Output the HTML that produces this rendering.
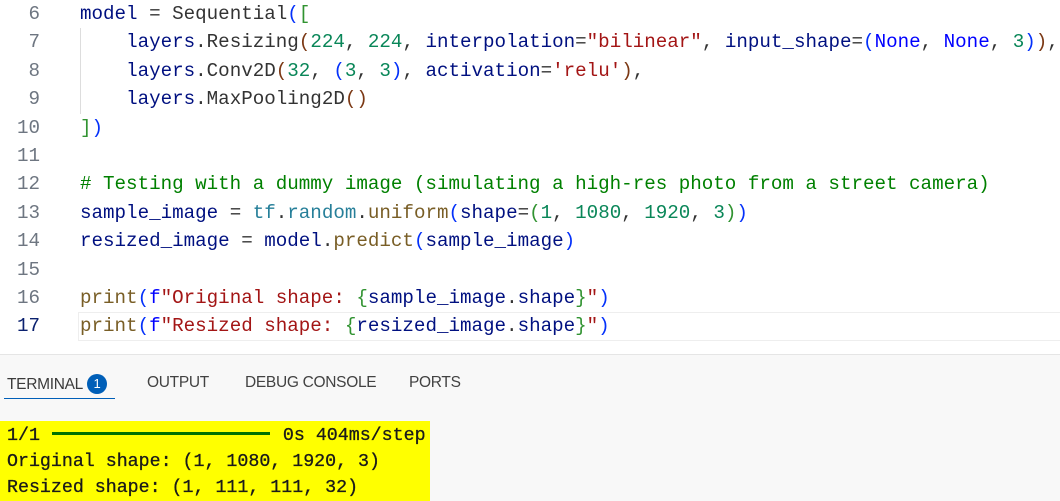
<!DOCTYPE html>
<html><head><style>
body{margin:0;width:1060px;height:500px;overflow:hidden;background:#fff;position:relative;font-family:"Liberation Mono",monospace}
.ed{position:absolute;top:0;left:0;width:1060px;height:354px;background:#fff}
.ln{position:absolute;left:0;width:1060px;height:28.4px;line-height:28.4px;font-size:19.2px;white-space:pre;color:#333}
.n{position:absolute;left:0;width:40px;text-align:right;color:#6e7681}
.c{position:absolute;left:80px}
.cur{position:absolute;left:78px;right:0;top:312px;height:27px;border:1px solid #eee;border-right:none}
.v{color:#001080}.f{color:#795E26}.num{color:#098658}.s{color:#A31515}.k{color:#0000FF}.t{color:#267f99}.cm{color:#008000}.d{color:#333}
.b1{color:#0431FA}.b2{color:#319331}.b3{color:#7B3814}
.guide{position:absolute;left:80px;top:28px;width:1px;height:86px;background:#ddd}
.panel{position:absolute;top:354px;left:0;width:1060px;height:146px;background:#f8f8f8;border-top:1px solid #e5e5e5}
.tab{position:absolute;top:19px;font-family:"Liberation Sans",sans-serif;font-size:15.5px;color:#424242;letter-spacing:-0.3px}
.badge{display:inline-block;width:20px;height:20px;border-radius:50%;background:#005fb8;color:#fff;text-align:center;line-height:20px;font-size:13px;margin-left:4px;vertical-align:1px}
.ul{position:absolute;left:4px;top:43px;width:111px;height:1px;background:#005fb8}
.term{position:absolute;left:0;top:66px;width:430px;height:80px;background:#ffff00;font-size:18.3px;line-height:26px;color:#1a1a1a;white-space:pre;padding-left:7px;box-sizing:border-box;padding-top:2px;-webkit-text-stroke:0.3px #1a1a1a}
.bar{display:inline-block;width:218px;height:3px;background:#007000;vertical-align:5px;margin:0 13px 0 12px}
</style></head><body>
<div class="ed">
<div class="cur"></div>
<div class="guide"></div>
<div class="ln" style="top:0"><span class="n">6</span><span class="c"><span class="v">model</span> = <span class="d">Sequential</span><span class="b1">(</span><span class="b2">[</span></span></div>
<div class="ln" style="top:28.4px"><span class="n">7</span><span class="c">    <span class="v">layers</span>.<span class="d">Resizing</span><span class="b3">(</span><span class="num">224</span>, <span class="num">224</span>, <span class="v">interpolation</span>=<span class="s">"bilinear"</span>, <span class="v">input_shape</span>=<span class="b1">(</span><span class="k">None</span>, <span class="k">None</span>, <span class="num">3</span><span class="b1">)</span><span class="b3">)</span>,</span></div>
<div class="ln" style="top:56.8px"><span class="n">8</span><span class="c">    <span class="v">layers</span>.<span class="d">Conv2D</span><span class="b3">(</span><span class="num">32</span>, <span class="b1">(</span><span class="num">3</span>, <span class="num">3</span><span class="b1">)</span>, <span class="v">activation</span>=<span class="s">'relu'</span><span class="b3">)</span>,</span></div>
<div class="ln" style="top:85.2px"><span class="n">9</span><span class="c">    <span class="v">layers</span>.<span class="d">MaxPooling2D</span><span class="b3">()</span></span></div>
<div class="ln" style="top:113.6px"><span class="n">10</span><span class="c"><span class="b2">]</span><span class="b1">)</span></span></div>
<div class="ln" style="top:142px"><span class="n">11</span></div>
<div class="ln" style="top:170.4px"><span class="n">12</span><span class="c cm"># Testing with a dummy image (simulating a high-res photo from a street camera)</span></div>
<div class="ln" style="top:198.8px"><span class="n">13</span><span class="c"><span class="v">sample_image</span> = <span class="t">tf</span>.<span class="t">random</span>.<span class="f">uniform</span><span class="b1">(</span><span class="v">shape</span>=<span class="b2">(</span><span class="num">1</span>, <span class="num">1080</span>, <span class="num">1920</span>, <span class="num">3</span><span class="b2">)</span><span class="b1">)</span></span></div>
<div class="ln" style="top:227.2px"><span class="n">14</span><span class="c"><span class="v">resized_image</span> = <span class="v">model</span>.<span class="f">predict</span><span class="b1">(</span><span class="v">sample_image</span><span class="b1">)</span></span></div>
<div class="ln" style="top:255.6px"><span class="n">15</span></div>
<div class="ln" style="top:284px"><span class="n">16</span><span class="c"><span class="f">print</span><span class="b1">(</span><span class="k">f</span><span class="s">"Original shape: </span><span class="b2">{</span><span class="v">sample_image</span>.<span class="v">shape</span><span class="b2">}</span><span class="s">"</span><span class="b1">)</span></span></div>
<div class="ln" style="top:312.4px"><span class="n" style="color:#0b216f">17</span><span class="c"><span class="f">print</span><span class="b1">(</span><span class="k">f</span><span class="s">"Resized shape: </span><span class="b2">{</span><span class="v">resized_image</span>.<span class="v">shape</span><span class="b2">}</span><span class="s">"</span><span class="b1">)</span></span></div>
</div>
<div class="panel">
<div class="tab" style="left:7px;color:#3b3b3b">TERMINAL<span class="badge">1</span></div>
<div class="tab" style="left:147px">OUTPUT</div>
<div class="tab" style="left:245px">DEBUG CONSOLE</div>
<div class="tab" style="left:409px">PORTS</div>
<div class="ul"></div>
<div class="term">1/1<span class="bar"></span>0s 404ms/step
Original shape: (1, 1080, 1920, 3)
Resized shape: (1, 111, 111, 32)</div>
</div>
</body></html>
